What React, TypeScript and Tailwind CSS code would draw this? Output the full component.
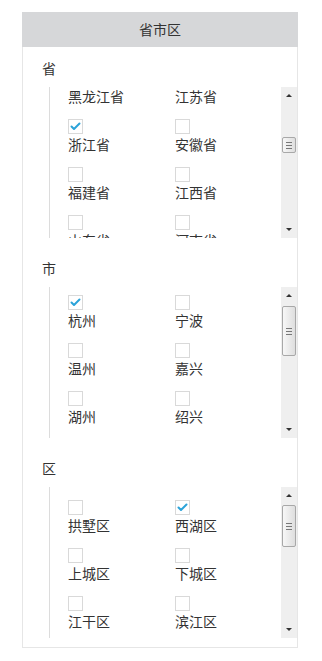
import React from 'react';

type Item = { name: string; checked?: boolean };

interface Section {
  title: string;
  items: Item[];
  offset: string;
  thumb: string;
}

const sections: Section[] = [
  {
    title: '省',
    offset: 'mt-[-16px]',
    thumb: 'mt-[33px] h-[16px]',
    items: [
      { name: '黑龙江省' },
      { name: '江苏省' },
      { name: '浙江省', checked: true },
      { name: '安徽省' },
      { name: '福建省' },
      { name: '江西省' },
      { name: '山东省' },
      { name: '河南省' },
    ],
  },
  {
    title: '市',
    offset: 'mt-[8px]',
    thumb: 'mt-[2px] h-[50px]',
    items: [
      { name: '杭州', checked: true },
      { name: '宁波' },
      { name: '温州' },
      { name: '嘉兴' },
      { name: '湖州' },
      { name: '绍兴' },
    ],
  },
  {
    title: '区',
    offset: 'mt-[13px]',
    thumb: 'mt-[1px] h-[42px]',
    items: [
      { name: '拱墅区' },
      { name: '西湖区', checked: true },
      { name: '上城区' },
      { name: '下城区' },
      { name: '江干区' },
      { name: '滨江区' },
    ],
  },
];

const Checkbox: React.FC<{ checked?: boolean }> = ({ checked }) => (
  <div className="w-[15px] h-[15px] border border-[#d9d9d9] bg-white flex items-center justify-center">
    {checked && (
      <svg width="11" height="9" viewBox="0 0 11 9" fill="none" stroke="#2ba3d9" strokeWidth="2" strokeLinecap="round" strokeLinejoin="round">
        <polyline points="1.5 4.5 4 7 9.5 1.5" />
      </svg>
    )}
  </div>
);

const ScrollBar: React.FC<{ thumb: string }> = ({ thumb }) => (
  <div className="w-[16px] shrink-0 bg-[#efefef] flex flex-col">
    {/* up arrow */}
    <div className="h-[17px] flex items-center justify-center">
      <div className="w-0 h-0 border-l-[3px] border-r-[3px] border-b-[3px] border-l-transparent border-r-transparent border-b-[#333]" />
    </div>
    <div className="flex-1">
      <div className={`${thumb} mx-[1px] border border-[#a8a8a8] rounded-[2px] bg-gradient-to-r from-[#f7f7f7] to-[#dedede] flex flex-col items-center justify-center gap-[2px]`}>
        <div className="w-[6px] h-px bg-[#777]" />
        <div className="w-[6px] h-px bg-[#777]" />
        <div className="w-[6px] h-px bg-[#777]" />
      </div>
    </div>
    {/* down arrow */}
    <div className="h-[17px] flex items-center justify-center">
      <div className="w-0 h-0 border-l-[3px] border-r-[3px] border-t-[3px] border-l-transparent border-r-transparent border-t-[#333]" />
    </div>
  </div>
);

export default function App() {
  return (
    <div
      className="min-h-[661px] bg-white pt-[12px] pl-[22px] text-[#333]"
      style={{ fontFamily: '"Noto Sans CJK SC", "Noto Sans", sans-serif' }}
    >
      <div className="w-[276px]">
        {/* Title */}
        <div className="h-[35px] bg-[#d6d7d9] text-center text-[14px] leading-[35px] text-[#333]">
          省市区
        </div>

        {/* Body */}
        <div className="border border-t-0 border-[#e6e6e6] pt-[11px] pb-[9px]">
          {sections.map((s, idx) => (
            <div key={s.title} className={idx > 0 ? 'mt-[20px]' : ''}>
              <div className="pl-[19px] text-[14px] leading-[20px]">{s.title}</div>
              <div className="mt-[9px] ml-[26px] h-[151px] flex border-l border-[#dcdcdc]">
                <div className="flex-1 overflow-hidden pl-[18px]">
                  <div className={`${s.offset} grid grid-cols-[107px_107px]`}>
                    {s.items.map((it) => (
                      <div key={it.name} className="h-[48px]">
                        <Checkbox checked={it.checked} />
                        <div className="text-[14px] leading-[20px] text-[#333] whitespace-nowrap">{it.name}</div>
                      </div>
                    ))}
                  </div>
                </div>
                <ScrollBar thumb={s.thumb} />
              </div>
            </div>
          ))}
        </div>
      </div>
    </div>
  );
}
